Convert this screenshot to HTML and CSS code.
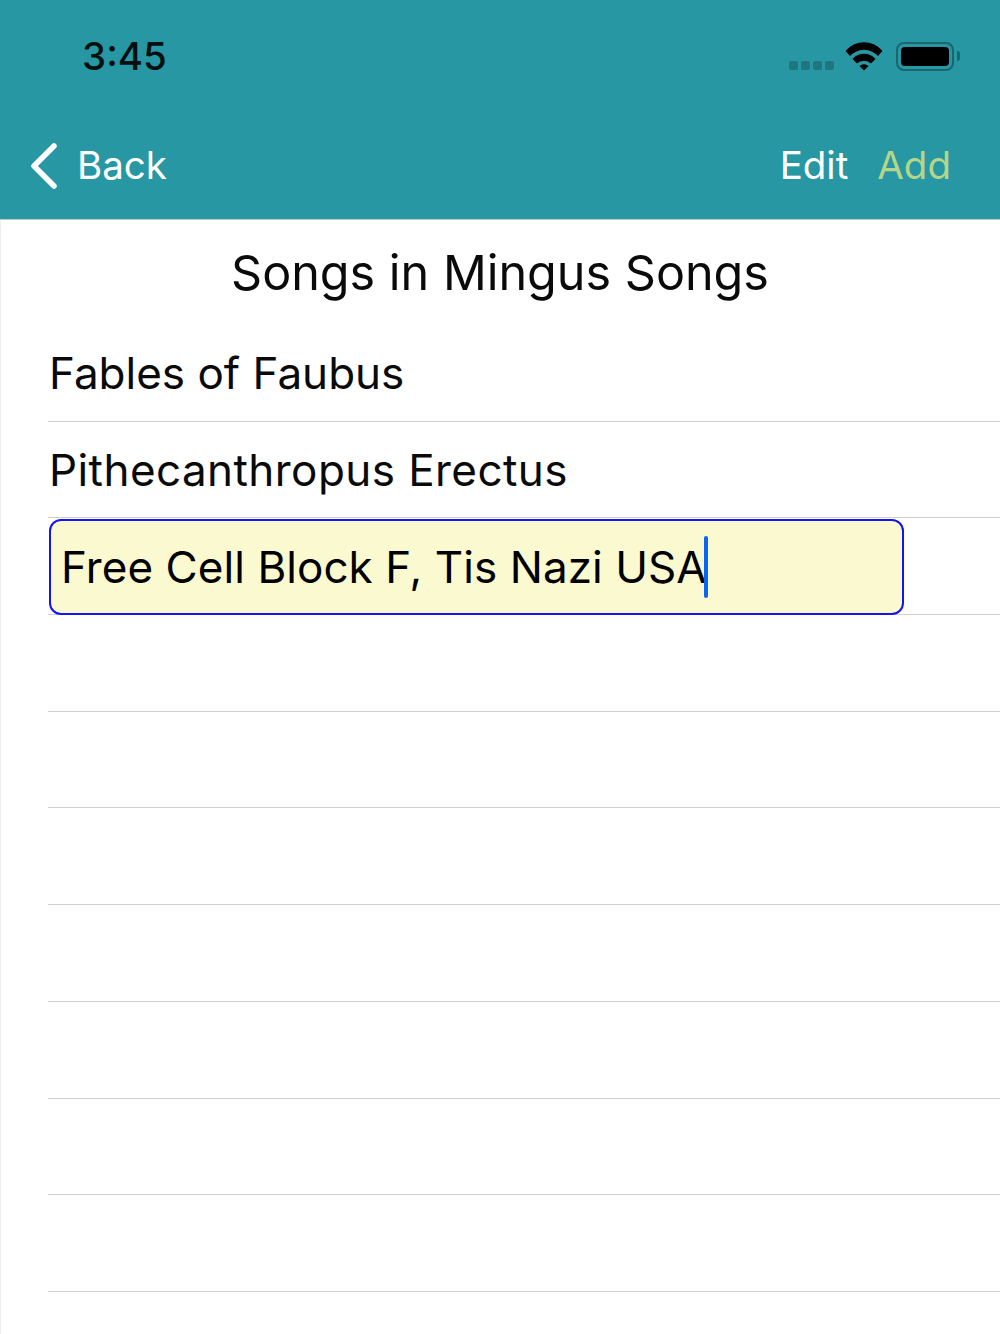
FILE: index.html
```html
<!DOCTYPE html>
<html lang="en">
<head>
    <meta charset="UTF-8">
    <title>Songs in Mingus Songs</title>
    <link rel="stylesheet" href="styles.css">
</head>
<body>
    <div class="screen">
        <header class="header">
            <div class="status-bar">
                <span class="time">3:45</span>
                <div class="status-icons">
                    <div class="signal"><i></i><i></i><i></i><i></i></div>
                    <svg class="wifi" width="38" height="30" viewBox="0 0 38 30">
                        <path d="M0.5 9 A24 24 0 0 1 37.5 9 L33 14 A19 19 0 0 0 5 14 Z" fill="#000"/>
                        <path d="M7.5 17 A15 15 0 0 1 30.5 17 L26 21.5 A10 10 0 0 0 12 21.5 Z" fill="#000"/>
                        <path d="M14.5 24 A6.5 6.5 0 0 1 23.5 24 L19 28.5 Z" fill="#000"/>
                    </svg>
                    <div class="battery"><div class="battery-fill"></div></div>
                    <div class="battery-cap"></div>
                </div>
            </div>
            <nav class="nav-bar">
                <a class="back">
                    <svg width="30" height="48" viewBox="0 0 30 48">
                        <path d="M26 4 L6 24 L26 44" fill="none" stroke="#fff" stroke-width="5.5" stroke-linecap="round" stroke-linejoin="round"/>
                    </svg>
                    <span>Back</span>
                </a>
                <div class="nav-actions">
                    <a class="edit">Edit</a>
                    <a class="add">Add</a>
                </div>
            </nav>
        </header>

        <div class="content">
            <h1 class="title">Songs in Mingus Songs</h1>

            <ul class="song-list">
                <li class="song">Fables of Faubus</li>
                <li class="song song-long">Pithecanthropus Erectus</li>
                <li class="song">
                    <div class="song-input"><span>Free Cell Block F, Tis Nazi USA</span><b class="caret"></b></div>
                </li>
                <li class="song"></li>
                <li class="song"></li>
                <li class="song"></li>
                <li class="song"></li>
                <li class="song"></li>
                <li class="song"></li>
                <li class="song"></li>
            </ul>
        </div>
    </div>
</body>
</html>
```

FILE: styles.css
```css
* { box-sizing: border-box; }
html, body {
    margin: 0;
    padding: 0;
    background: #fff;
}
body {
    font-family: Inter, "Liberation Sans", sans-serif;
    color: #000;
}
.screen {
    width: 1000px;
    height: 1334px;
    overflow: hidden;
}
.header {
    height: 220px;
    background: #2797a3;
    border-bottom: 1px solid #b9cdd0;
}
.status-bar {
    height: 112px;
    padding: 34px 40px 0 82px;
    display: flex;
    justify-content: space-between;
}
.time {
    font-size: 38.5px;
    line-height: 44px;
    font-weight: 500;
    color: #050f10;
}
.status-icons {
    display: flex;
    align-items: flex-start;
    padding-top: 8px;
}
.signal {
    display: flex;
    gap: 2.5px;
    margin-top: 19px;
    margin-right: 11px;
}
.signal i {
    width: 9.5px;
    height: 9px;
    border-radius: 2px;
    background: #1f7580;
}
.wifi { margin-right: 13px; }
.battery {
    width: 58px;
    height: 29px;
    padding: 3px;
    border: 2px solid #1a6670;
    border-radius: 8px;
}
.battery-fill {
    height: 100%;
    background: #000;
    border-radius: 4px;
}
.battery-cap {
    width: 3px;
    height: 10px;
    margin: 9px 0 0 3px;
    background: #1a6670;
    border-radius: 0 3px 3px 0;
}
.nav-bar {
    height: 107px;
    padding: 0 49px 0 28px;
    display: flex;
    align-items: flex-start;
    justify-content: space-between;
}
.back {
    display: flex;
    align-items: flex-start;
    gap: 19px;
    color: #fff;
    font-size: 38.5px;
    line-height: 46px;
    padding-top: 30px;
}
.nav-actions {
    display: flex;
    gap: 29px;
    font-size: 38.5px;
    line-height: 46px;
    padding-top: 30px;
}
.edit { color: #fff; }
.add { color: #b4d58a; }
.content {
    height: 1114px;
    border-left: 1px solid #eee;
}
.title {
    margin: 0 0 0 -1px;
    height: 105px;
    padding-top: 24px;
    font-size: 48.5px;
    line-height: 58px;
    font-weight: 400;
    text-align: center;
    color: #0a0a0a;
}
.song-list {
    list-style: none;
    margin: 0;
    padding: 0 0 0 47px;
}
.song {
    height: 96.7px;
    padding-top: 21px;
    padding-left: 1px;
    border-bottom: 1px solid #d0d0d0;
    font-size: 44px;
    line-height: 54px;
    color: #0a0a0a;
}
.song-long { letter-spacing: 0.43px; }
.song-input {
    width: 855px;
    height: 96px;
    margin-top: -20.5px;
    padding-left: 10px;
    display: flex;
    align-items: center;
    background: #fbf9cf;
    border: 2px solid #1414f5;
    border-radius: 12px;
    letter-spacing: 0.07px;
    color: #000;
}
.caret {
    width: 4px;
    height: 62px;
    margin-left: -3px;
    background: #0a66f0;
    border-radius: 2px;
}
```
